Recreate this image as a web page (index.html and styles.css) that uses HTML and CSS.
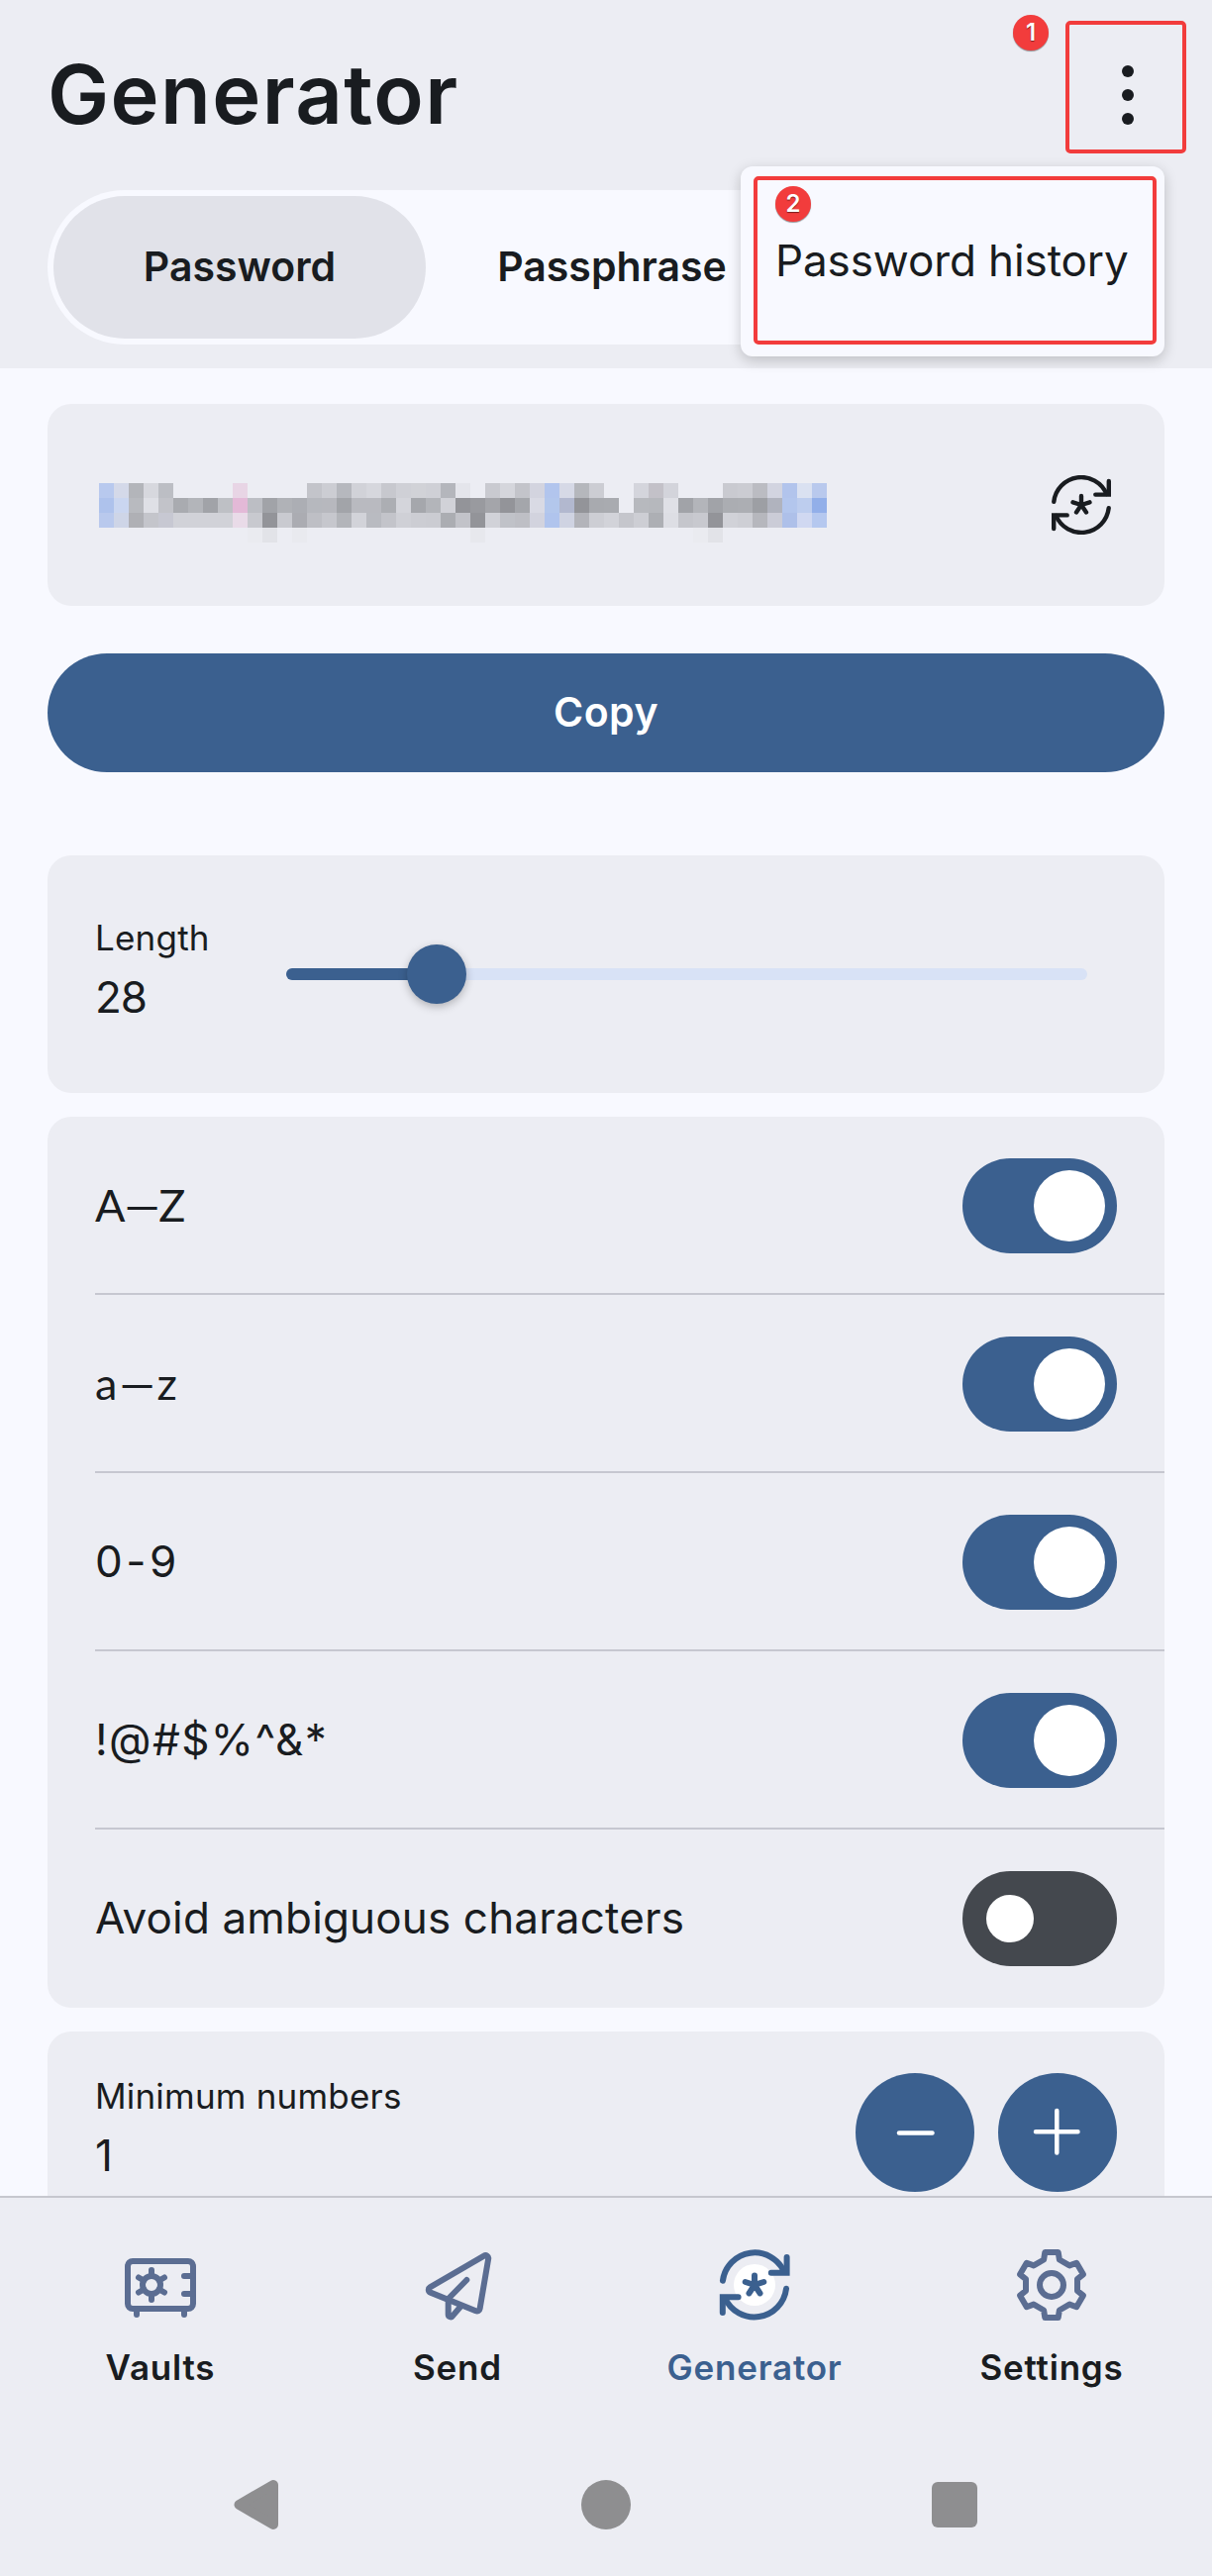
FILE: index.html
```html
<!DOCTYPE html>
<html lang="en">
<head>
<meta charset="utf-8">
<title>Generator</title>
<link rel="stylesheet" href="styles.css">
</head>
<body>
<div class="screen">
  <header class="header">
    <div class="title-row">
      <h1>Generator</h1>
      <button class="more" aria-label="More options">
        <span class="dot"></span>
        <span class="dot"></span>
        <span class="dot"></span>
      </button>
    </div>
    <div class="tabs">
      <div class="tab active">Password</div>
      <div class="tab">Passphrase</div>
    </div>
    <div class="menu">
      <div class="menu-item">Password history</div>
    </div>
    <div class="mark mark-more"></div>
    <div class="mark mark-history"></div>
    <div class="badge badge-1">1</div>
    <div class="badge badge-2">2</div>
  </header>

  <main class="content">
    <section class="card password-card">
      <div class="mosaic" id="mosaic"></div>
      <svg class="refresh" width="60" height="60" viewBox="0 0 60 60">
        <path d="M2.3 26.7A27.8 27.8 0 0 1 55.5 19"/>
        <path d="M57.8 6v13.6H44.3"/>
        <path d="M57.7 33.3A27.8 27.8 0 0 1 4.5 41"/>
        <path d="M15.7 40.4H2.2V54"/>
        <path d="M30 30v-9M30 30l-8.5-2.7M30 30l8.5-2.7M30 30l-5 7.4M30 30l5 7.4"/>
      </svg>
    </section>

    <button class="copy">Copy</button>

    <section class="card length-card">
      <div class="field">
        <div class="field-label">Length</div>
        <div class="field-value">28</div>
      </div>
      <div class="slider">
        <div class="slider-fill"></div>
        <div class="slider-thumb"></div>
      </div>
    </section>

    <section class="card">
      <div class="row">
        <span class="upper">A—Z</span>
        <div class="switch on"></div>
      </div>
      <div class="row">
        <span class="lower">a—z</span>
        <div class="switch on"></div>
      </div>
      <div class="row">
        <span class="digits">0-9</span>
        <div class="switch on"></div>
      </div>
      <div class="row">
        <span class="special">!@#$%^&amp;*</span>
        <div class="switch on"></div>
      </div>
      <div class="row">
        <span>Avoid ambiguous characters</span>
        <div class="switch"></div>
      </div>
    </section>

    <section class="card stepper-card">
      <div class="field">
        <div class="field-label">Minimum numbers</div>
        <div class="field-value">1</div>
      </div>
      <div class="stepper">
        <button class="round" aria-label="Decrease">
          <svg width="120" height="120" viewBox="0 0 120 120"><path d="M44 60.6h33.5"/></svg>
        </button>
        <button class="round" aria-label="Increase">
          <svg width="120" height="120" viewBox="0 0 120 120"><path d="M38 59.3h42.5M59.3 38v42.5"/></svg>
        </button>
      </div>
    </section>
  </main>

  <nav class="nav">
    <a class="nav-item">
      <svg width="72" height="72" viewBox="0 0 72 72">
        <rect x="3" y="12" width="66" height="48" rx="5"/>
        <path d="M12 62v4M60 62v4M60 27h8M60 45h8"/>
        <circle cx="27" cy="36" r="9"/>
        <path d="M27 27v-6M27 45v6M19.2 31.5L14 28.5M34.8 31.5l5.2-3M19.2 40.5L14 43.5M34.8 40.5l5.2 3"/>
      </svg>
      <span>Vaults</span>
    </a>
    <a class="nav-item">
      <svg width="72" height="72" viewBox="0 0 72 72">
        <path d="M62.8 6.6L8.2 38.4a2.9 2.9 0 0 0 .5 5.2L54.6 62.2a2.9 2.9 0 0 0 4-2.2L67.2 9.6a2.9 2.9 0 0 0-4.4-3z"/>
        <path d="M45.3 31L26.7 50v16a2.4 2.4 0 0 0 4.3 1.4l8-9.4"/>
      </svg>
      <span>Send</span>
    </a>
    <a class="nav-item active">
      <svg width="72" height="72" viewBox="0 0 72 72">
        <circle class="glow" cx="36" cy="36" r="21"/>
        <path d="M3.9 31.8A32.5 32.5 0 0 1 66 23"/>
        <path d="M68.6 8v15.7H52.8"/>
        <path d="M68 39.8A32.5 32.5 0 0 1 6 49"/>
        <path d="M19.6 48.2H3.8V64"/>
        <path d="M36 36V26.5M36 36l-9.3-3M36 36l9.3-3M36 36l-5.5 8.4M36 36l5.5 8.4"/>
      </svg>
      <span>Generator</span>
    </a>
    <a class="nav-item">
      <svg width="72" height="72" viewBox="0 0 72 72">
        <path d="M28.1 10.5L29.3 3H42.7L43.9 10.5L54.1 16.4L61.2 13.7L67.9 25.3L62 30.1V41.9L67.9 46.7L61.2 58.3L54.1 55.6L43.9 61.5L42.7 69H29.3L28.1 61.5L17.9 55.6L10.8 58.3L4.1 46.7L10 41.9V30.1L4.1 25.3L10.8 13.7L17.9 16.4z"/>
        <circle cx="36" cy="36" r="12"/>
      </svg>
      <span>Settings</span>
    </a>
  </nav>

  <div class="system-bar">
    <svg width="52" height="52" viewBox="0 0 52 52"><path d="M8.5 26L43 6v40z" stroke-width="10"/></svg>
    <svg width="52" height="52" viewBox="0 0 52 52"><circle cx="26" cy="26" r="25"/></svg>
    <svg width="52" height="52" viewBox="0 0 52 52"><rect x="3" y="3" width="46" height="46" rx="6"/></svg>
  </div>
</div>

<script>
// one string per line of blocks, "-" is an empty block
const ROWS = [
  'b8c9ee d4d9e9 b3b5ba d7d8de bcbec4 - - - - e8d5e5 - - - - c3c4ca cccdd3 b6b8be d1d2d8 d6d7dd c7c8ce cfd0d6 d1d2d7 cfd0d6 b4b6bc e4e5eb - c9cad0 d5d6dc c3c4ca d3d4df b2c5ed d6d9e6 b5b7bc cccdd3 - - d4d5dc c3c1c8 d3d4db - - - c9cad0 cbccd2 bbbcc2 d2d4e0 b2c4ec dae1f1 b9c9ed',
  'aec2ec cad6f0 b8babf dfe0e6 c2c3c9 a9abb0 b3b5ba a1a3a8 bec0c5 e3b9d7 bcbec4 a1a3a8 b0b2b7 acaeb4 b6b8be b7b8be a2a4a9 b9bac0 b9bac0 acaeb3 d4d5db a5a7ac b3b5ba d1d2d8 939499 999a9f a4a5aa 939499 a4a6ab d9dae4 b3c7ec b2b8cf 939499 a8aaaf a9abb0 - b7b9be b6b8bd dfe0e6 a1a3a8 b3b5ba a1a3a8 abadb2 acaeb3 9d9fa4 b0b3be b3c6ed bdcdee 92afe9',
  'b9c9ed ced5e7 afb0b5 c4c5cb c7c8d2 d1d2d8 d1d2d8 d1d2d8 d1d2d8 e9dbe8 c8c9cf 939499 c9cad0 abacb2 bebfc5 c6c7cd b3b5ba d2d3d9 b9bbc1 c3c4ca cfd0d6 cccdd3 cbccd2 abadb2 c2c3c9 939499 d1d2d8 c0c2c8 bebfc5 d2d3de b0c4ed cfd3e2 b3b4ba cdced4 d2d3d9 c5c6cc cdced4 adafb4 dddee4 c5c6cc c8c9cf 939499 d1d2d8 cecfd5 b6b7bd cbccd7 aec0e9 d0d8f1 b5c8ef',
  '- - - - - - - - - - eaebf0 e2e3e8 - e9eaef - - - - - - - - - - - e7e8ed - - - - - - - - - - - - - - eaebf0 e2e3e8 - - - - - - -'
]

const mosaic = document.getElementById('mosaic')
for (const color of ROWS.join(' ').split(' ')) {
  const block = document.createElement('i')
  if (color !== '-') block.style.background = `#${color}`
  mosaic.append(block)
}
</script>
</body>
</html>
```
FILE: styles.css
```css
* {
  box-sizing: border-box;
}

body {
  margin: 0;
  background: #f8f9ff;
  color: #191c20;
  font-family: Inter, sans-serif;
}

button {
  border: 0;
  padding: 0;
  font: inherit;
}

.screen {
  display: flex;
  flex-direction: column;
  width: 1224px;
  height: 2602px;
  overflow: hidden;
}

.header {
  position: relative;
  flex: none;
  height: 372px;
  padding: 0 48px;
  background: #ecedf3;
}

.title-row {
  display: flex;
  justify-content: space-between;
  align-items: center;
  height: 192px;
}

h1 {
  margin: 0;
  padding-bottom: 2px;
  font-size: 83px;
  font-weight: 600;
  letter-spacing: 1.4px;
  line-height: 1;
}

.more {
  display: flex;
  flex-direction: column;
  align-items: center;
  gap: 12px;
  width: 75px;
  background: none;
}

.dot {
  width: 12px;
  height: 12px;
  border-radius: 50%;
  background: #191c20;
}

.tabs {
  display: flex;
  height: 156px;
  padding: 6px;
  border-radius: 78px;
  background: #f8f9ff;
}

.tab {
  display: flex;
  align-items: center;
  justify-content: center;
  width: 376px;
  padding-bottom: 2px;
  border-radius: 72px;
  font-size: 41px;
  font-weight: 600;
}

.tab.active {
  background: #e1e2e9;
}

.menu {
  position: absolute;
  left: 748px;
  top: 168px;
  width: 428px;
  height: 192px;
  padding: 65px 35px 0;
  border-radius: 12px;
  background: #f8f9ff;
  box-shadow: 0 4px 14px rgba(0, 0, 0, 0.2);
}

.menu-item {
  font-size: 44px;
  letter-spacing: -0.1px;
  line-height: 60px;
  white-space: nowrap;
}

.mark {
  position: absolute;
  border: 4px solid #f23c3c;
  border-radius: 5px;
}

.mark-more {
  left: 1076px;
  top: 21px;
  width: 122px;
  height: 134px;
}

.mark-history {
  left: 761px;
  top: 178px;
  width: 407px;
  height: 170px;
}

.badge {
  position: absolute;
  width: 36px;
  height: 36px;
  border-radius: 50%;
  background: #f23c3c;
  box-shadow: 0 1px 1px rgba(0, 0, 0, 0.4);
  color: #fff;
  font: 600 24px/36px Inter, sans-serif;
  text-align: center;
  text-shadow: 0 1px 1px rgba(0, 0, 0, 0.5);
}

.badge-1 {
  left: 1023px;
  top: 15px;
}

.badge-2 {
  left: 783px;
  top: 188px;
}

.content {
  flex: 1;
  min-height: 0;
  padding: 36px 48px 0;
  overflow: hidden;
}

.card {
  margin-bottom: 24px;
  border-radius: 24px;
  background: #ecedf3;
}

.password-card {
  display: flex;
  align-items: center;
  justify-content: space-between;
  height: 204px;
  margin-bottom: 48px;
  padding: 16px 54px 0 52px;
}

.mosaic {
  display: grid;
  grid-template-columns: repeat(49, 15px);
  grid-auto-rows: 15px;
}

.refresh {
  margin-top: -16px;
  fill: none;
  stroke: #191c20;
  stroke-width: 4.4;
  stroke-linecap: round;
}

.copy {
  display: block;
  width: 100%;
  height: 120px;
  margin-bottom: 84px;
  padding: 0 0 2px;
  border-radius: 60px;
  background: #3b608f;
  color: #fff;
  font-size: 41px;
  font-weight: 600;
  letter-spacing: 0.5px;
}

.length-card {
  display: flex;
  height: 240px;
  padding: 53px 78px 0 48px;
}

.field {
  flex: 1;
}

.field-label {
  font-size: 35px;
  letter-spacing: 0.2px;
  line-height: 60px;
}

.field-value {
  font-size: 44px;
  letter-spacing: -1px;
  line-height: 60px;
}

.slider {
  position: relative;
  width: 809px;
  height: 12px;
  margin-top: 61px;
  border-radius: 6px;
  background: #d8e2f6;
}

.slider-fill {
  width: 152px;
  height: 12px;
  border-radius: 6px;
  background: #3b608f;
}

.slider-thumb {
  position: absolute;
  left: 122px;
  top: -24px;
  width: 60px;
  height: 60px;
  border-radius: 50%;
  background: #3b608f;
  box-shadow: 0 3px 8px rgba(0, 0, 0, 0.25);
}

.row {
  display: flex;
  align-items: center;
  justify-content: space-between;
  height: 180px;
  margin-left: 48px;
  padding: 2px 48px 0 0;
  border-bottom: 2px solid #c6c7d0;
  font-size: 44px;
  letter-spacing: 0.15px;
}

.row:last-child {
  padding-top: 0;
  border-bottom: 0;
}

.row span {
  padding-bottom: 2px;
}

.upper,
.lower {
  font-family: Lato, sans-serif;
  font-size: 45px;
  letter-spacing: -0.8px;
}

.lower {
  letter-spacing: 2.4px;
}

.digits {
  letter-spacing: 3.5px;
}

.special {
  letter-spacing: 1.4px;
}

.switch {
  display: flex;
  align-items: center;
  width: 156px;
  height: 96px;
  padding: 0 24px;
  border-radius: 48px;
  background: #44484e;
}

.switch::before {
  content: "";
  width: 48px;
  height: 48px;
  border-radius: 50%;
  background: #fff;
}

.switch.on {
  justify-content: flex-end;
  padding: 0 12px;
  background: #3b608f;
}

.switch.on::before {
  width: 72px;
  height: 72px;
}

.stepper-card {
  display: flex;
  height: 204px;
  padding: 35px 48px 0;
}

.stepper {
  display: flex;
  gap: 24px;
  padding-top: 7px;
}

.round {
  width: 120px;
  height: 120px;
  border-radius: 50%;
  background: #3b608f;
}

.round svg {
  display: block;
  fill: none;
  stroke: #fff;
  stroke-width: 4.5;
  stroke-linecap: round;
}

.nav {
  display: flex;
  flex: none;
  height: 242px;
  padding: 52px 12px 0;
  border-top: 2px solid #c6c7ce;
  background: #ecedf3;
}

.nav-item {
  display: flex;
  flex-direction: column;
  align-items: center;
  width: 300px;
  font-size: 35px;
  font-weight: 600;
  letter-spacing: 0.8px;
  line-height: 48px;
}

.nav-item svg {
  margin-bottom: 23px;
  fill: none;
  stroke: #5b6d92;
  stroke-width: 6;
  stroke-linecap: round;
  stroke-linejoin: round;
}

.nav-item.active {
  color: #3b608f;
}

.nav-item.active svg {
  stroke: #3b608f;
  stroke-linejoin: miter;
}

.nav-item .glow {
  fill: #fff;
  stroke: none;
}

.system-bar {
  display: flex;
  flex: none;
  justify-content: space-between;
  height: 142px;
  padding: 44px 234px 0 233px;
  background: #ecedf3;
}

.system-bar svg {
  fill: #8e8e90;
  stroke: #8e8e90;
  stroke-width: 0;
  stroke-linejoin: round;
}
```
